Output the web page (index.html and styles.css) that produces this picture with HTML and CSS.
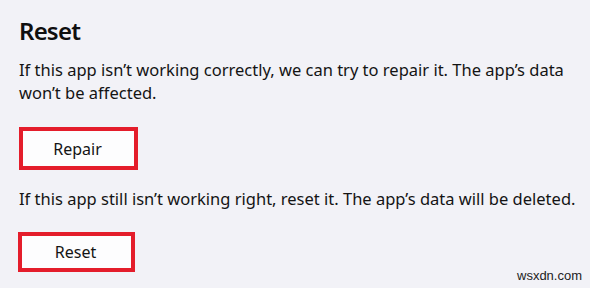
FILE: index.html
```html
<!DOCTYPE html>
<html lang="en">
<head>
<meta charset="utf-8">
<title>Reset</title>
<link rel="stylesheet" href="styles.css">
</head>
<body>
<main class="section">
  <h2 class="title">Reset</h2>
  <p class="desc desc-first">If this app isn’t working correctly, we can try to repair it. The app’s data won’t be affected.</p>
  <div class="highlight highlight-repair"><button class="btn btn-repair">Repair</button></div>
  <p class="desc desc-second">If this app still isn’t working right, reset it. The app’s data will be deleted.</p>
  <div class="highlight highlight-reset"><button class="btn btn-reset">Reset</button></div>
</main>
<span class="watermark">wsxdn.com</span>
</body>
</html>
```

FILE: styles.css
```css
html, body {
  margin: 0;
  padding: 0;
  background: #f2f2f7;
  width: 590px;
  height: 288px;
  overflow: hidden;
}
body {
  position: relative;
  font-family: "Noto Sans", "Open Sans", sans-serif;
  color: #141414;
}
.section {
  padding: 16px 0 0 19px;
  display: flex;
  flex-direction: column;
  align-items: flex-start;
}
.title {
  margin: 0;
  font-size: 24px;
  line-height: 30px;
  font-weight: 600;
  letter-spacing: -0.8px;
  color: #0f0f0f;
}
.desc {
  margin: 0;
  font-size: 16.5px;
  line-height: 23px;
  width: 560px;
}
.desc-first { margin-top: 12px; }
.desc-second { margin-top: 17px; }
.highlight {
  border: 4px solid #e41d2b;
  box-sizing: border-box;
  background: #fdfdfe;
}
.highlight-repair {
  margin-top: 23px;
  width: 119px;
  height: 43px;
}
.highlight-reset {
  margin-top: 22px;
  margin-left: -1px;
  width: 117px;
  height: 40px;
}
.btn {
  width: 100%;
  height: 100%;
  border: 0;
  background: transparent;
  font-family: inherit;
  font-size: 16px;
  color: #141414;
  padding: 0 2px 0 0;
}
.watermark {
  position: absolute;
  left: 517px;
  top: 268px;
  font-family: "Liberation Sans", Arial, sans-serif;
  font-size: 13px;
  color: #222;
}
```
